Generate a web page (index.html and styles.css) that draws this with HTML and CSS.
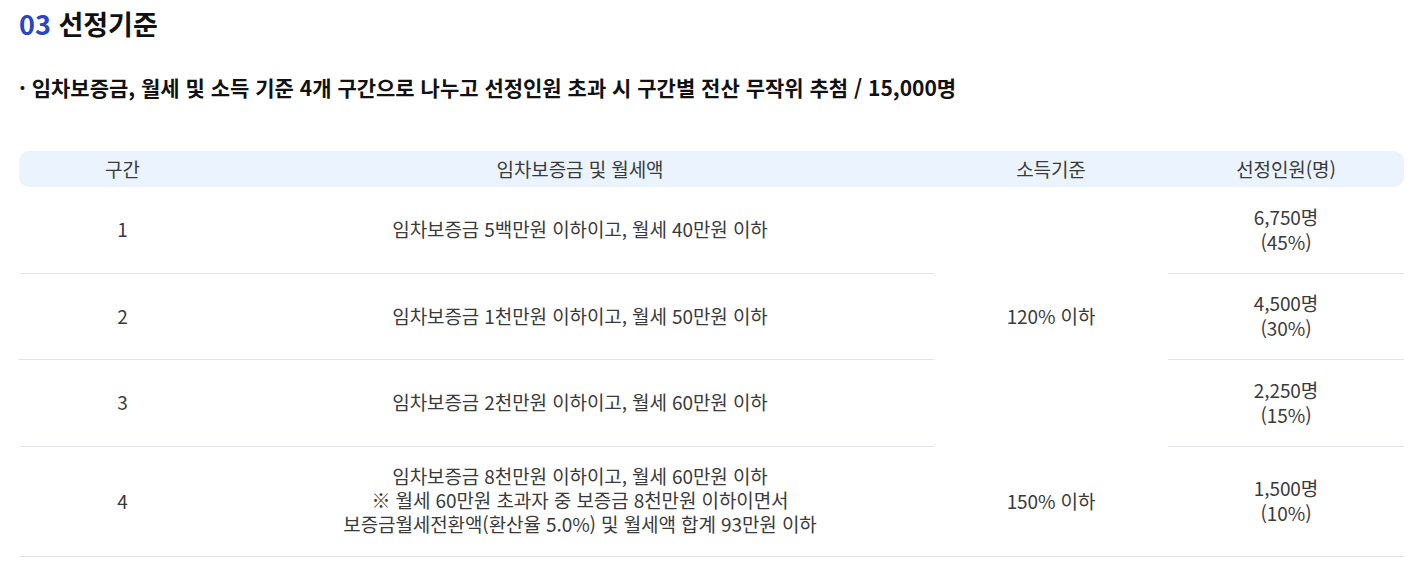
FILE: index.html
```html
<!DOCTYPE html>
<html lang="ko">
<head>
<meta charset="utf-8">
<link rel="stylesheet" href="styles.css">
</head>
<body>
<section class="section">
  <h2 class="title"><span class="num">03</span> 선정기준</h2>
  <p class="bullet">· 임차보증금, 월세 및 소득 기준 4개 구간으로 나누고 선정인원 초과 시 구간별 전산 무작위 추첨 / 15,000명</p>
  <table class="tbl">
    <colgroup>
      <col class="c1"><col class="c2"><col class="c3"><col class="c4">
    </colgroup>
    <thead>
      <tr><th>구간</th><th>임차보증금 및 월세액</th><th>소득기준</th><th>선정인원(명)</th></tr>
    </thead>
    <tbody>
      <tr class="r r-tall">
        <td>1</td>
        <td>임차보증금 5백만원 이하이고, 월세 40만원 이하</td>
        <td rowspan="3" class="span">120% 이하</td>
        <td>6,750명<br>(45%)</td>
      </tr>
      <tr class="r">
        <td>2</td>
        <td>임차보증금 1천만원 이하이고, 월세 50만원 이하</td>
        <td>4,500명<br>(30%)</td>
      </tr>
      <tr class="r r-tall">
        <td>3</td>
        <td>임차보증금 2천만원 이하이고, 월세 60만원 이하</td>
        <td>2,250명<br>(15%)</td>
      </tr>
      <tr class="r4">
        <td>4</td>
        <td class="multi">임차보증금 8천만원 이하이고, 월세 60만원 이하<br>※ 월세 60만원 초과자 중 보증금 8천만원 이하이면서<br>보증금월세전환액(환산율 5.0%) 및 월세액 합계 93만원 이하</td>
        <td>150% 이하</td>
        <td>1,500명<br>(10%)</td>
      </tr>
    </tbody>
  </table>
</section>
</body>
</html>
```

FILE: styles.css
```css
* { box-sizing: border-box; }
body {
  margin: 0;
  background: #fff;
  font-family: "Noto Sans CJK KR", "Noto Sans", sans-serif;
  color: #111;
}
.section {
  padding: 4px 16px 0 19px;
}
.title {
  margin: 0;
  font-size: 27px;
  font-weight: 700;
  line-height: 40px;
  letter-spacing: 0;
  color: #111;
}
.num { color: #2b45c2; }
.bullet {
  margin: 28px 0 0;
  font-size: 21px;
  font-weight: 700;
  line-height: 30px;
  letter-spacing: 0;
  color: #111;
}
.tbl {
  margin-top: 49px;
  width: 1385px;
  border-collapse: separate;
  border-spacing: 0;
  table-layout: fixed;
  font-size: 19px;
  color: #3a3a3a;
  letter-spacing: -0.1px;
}
.c1 { width: 207px; }
.c2 { width: 708px; }
.c3 { width: 234px; }
.c4 { width: 236px; }
.tbl th {
  height: 36px;
  padding: 0 0 2px;
  background: #ebf4fe;
  font-weight: 400;
  color: #3a3a3a;
  text-align: center;
}
.tbl th:first-child { border-radius: 10px 0 0 10px; }
.tbl th:last-child { border-radius: 0 10px 10px 0; }
.tbl td {
  padding: 0 0 3px;
  text-align: center;
  vertical-align: middle;
  line-height: 25px;
  border-bottom: 1px solid #e2e4e7;
}
.tbl .r td { height: 86px; }
.tbl .r-tall td { height: 87px; }
.tbl .r4 td { height: 110px; }
.tbl td.span { border-bottom: none; }
.tbl td.multi { line-height: 24px; }
```
